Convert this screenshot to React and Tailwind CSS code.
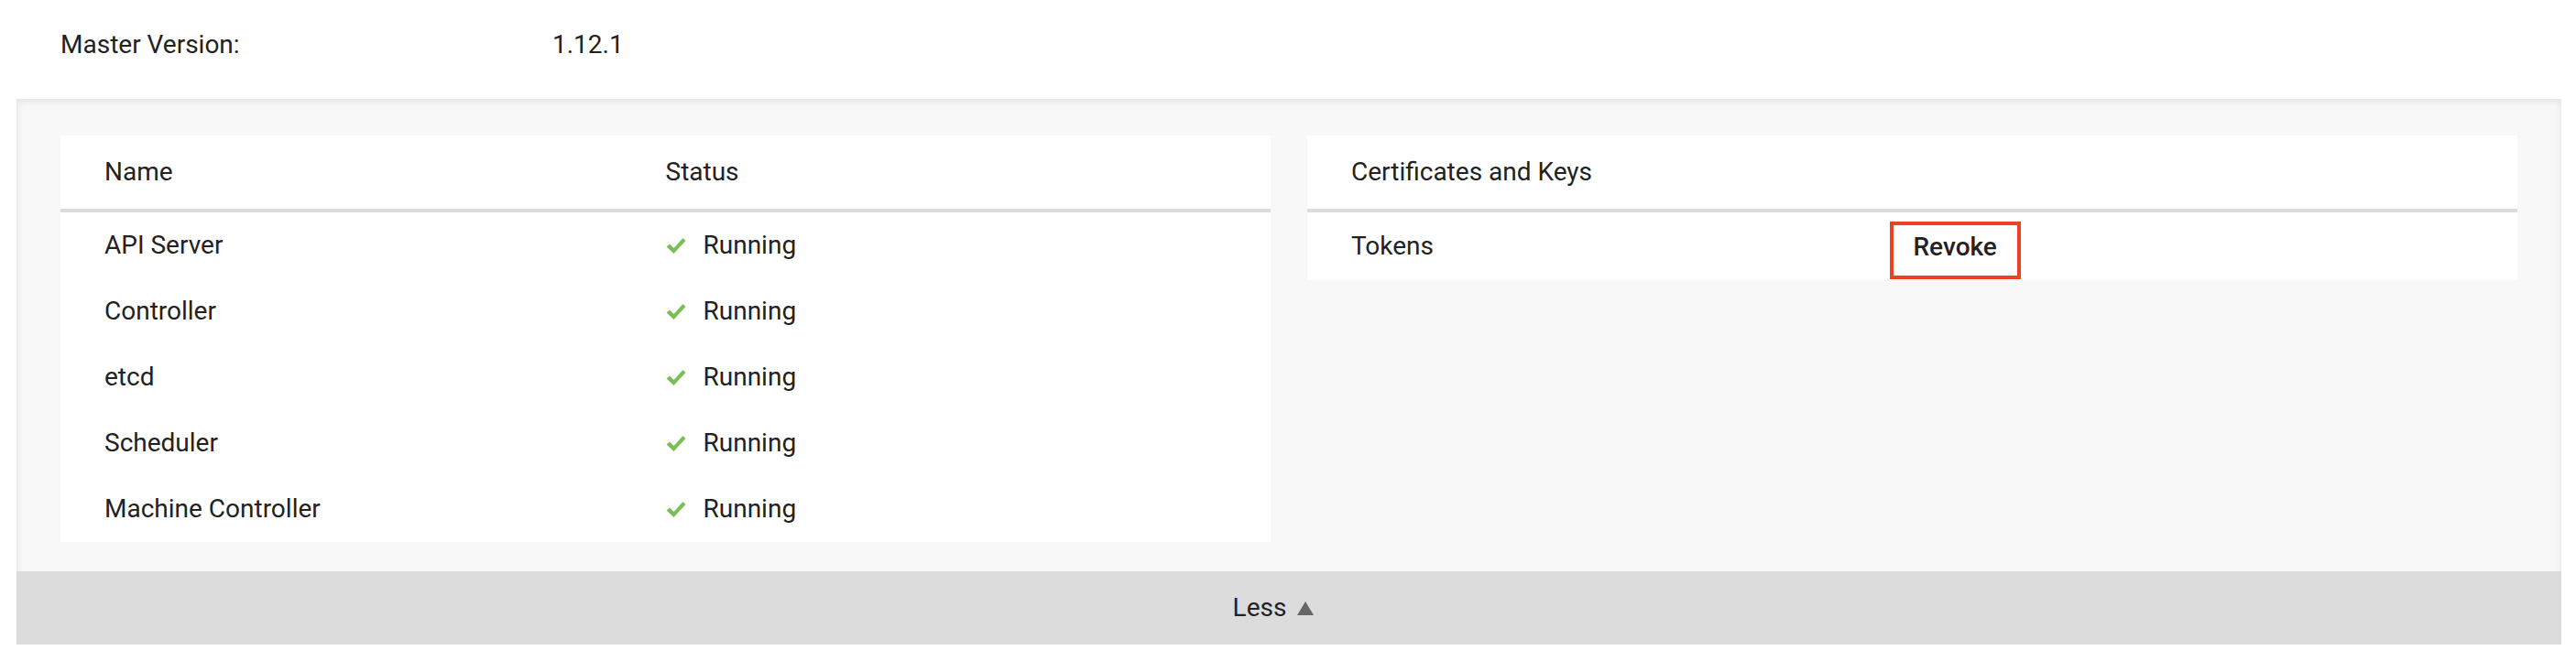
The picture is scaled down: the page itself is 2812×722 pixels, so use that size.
const components = ["API Server", "Controller", "etcd", "Scheduler", "Machine Controller"];

function Check() {
  return (
    <svg width="22" height="19" viewBox="0 0 22 19" className="shrink-0">
      <path d="M0.5 10.5 L4 7.5 L8.5 12 L18.5 1 L21.5 4 L8.5 18 Z" fill="#7cbd54" />
    </svg>
  );
}

function Caret() {
  return (
    <svg width="18" height="15" viewBox="0 0 18 15" className="ml-[12px]">
      <polygon points="9,0 18,15 0,15" fill="#666666" />
    </svg>
  );
}

function StatusCard() {
  return (
    <div className="flex-1 bg-white">
      <div className="grid h-[84px] grid-cols-2 items-center border-b-4 border-[#dcdcdc] px-[48px] leading-[32px]">
        <span>Name</span>
        <span>Status</span>
      </div>
      {components.map((name) => (
        <div key={name} className="grid h-[72px] grid-cols-2 items-center px-[48px] leading-[32px]">
          <span>{name}</span>
          <span className="flex items-center gap-[19px]">
            <Check />
            Running
          </span>
        </div>
      ))}
    </div>
  );
}

function KeysCard() {
  return (
    <div className="flex-1 bg-white">
      <div className="flex h-[84px] items-center border-b-4 border-[#dcdcdc] px-[48px] leading-[32px]">
        Certificates and Keys
      </div>
      <div className="grid h-[74px] grid-cols-2 items-center px-[48px] leading-[32px]">
        <span>Tokens</span>
        <div>
          <button className="-ml-[25px] mt-[8px] flex h-[63px] w-[143px] items-center border-4 border-[#ee4123] pb-[6px] pl-[22px] font-medium text-[#222]">
            Revoke
          </button>
        </div>
      </div>
    </div>
  );
}

export default function App() {
  return (
    <div className="h-[722px] w-[2812px] bg-white font-['Roboto',sans-serif] text-[28px] text-[#222]">
      <div className="flex h-[108px] items-start pl-[66px] pt-[33px] leading-[32px]">
        <span className="w-[537px]">Master Version:</span>
        <span>1.12.1</span>
      </div>
      <div className="ml-[18px] mr-[16px] bg-[#f8f8f8] shadow-[inset_0_3px_8px_rgba(0,0,0,0.09)]">
        <div className="flex items-start gap-[40px] px-[48px] pb-[32px] pt-[40px]">
          <StatusCard />
          <KeysCard />
        </div>
        <div className="flex h-[80px] items-center justify-center bg-[#dcdcdc] pr-[34px] leading-[32px]">
          <span>Less</span>
          <Caret />
        </div>
      </div>
    </div>
  );
}
